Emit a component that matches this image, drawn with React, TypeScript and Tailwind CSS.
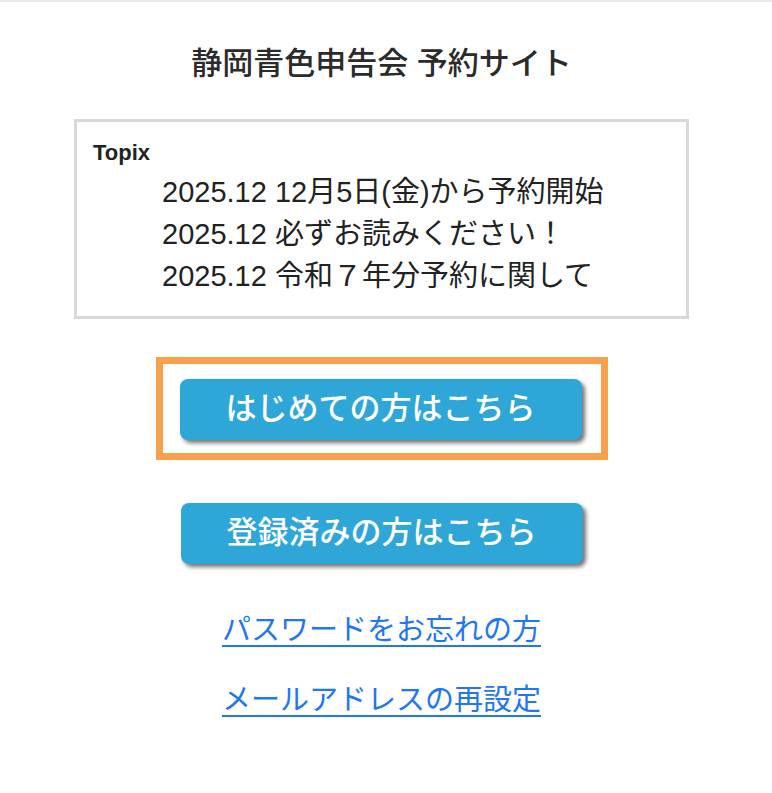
import React from "react";

const jp = { fontFamily: '"Liberation Sans", "Noto Sans CJK JP", sans-serif' };

export default function App() {
  return (
    <div className="min-h-[793px] w-[772px] bg-white border-t-2 border-[#e8e8e8]" style={jp}>
      <div className="w-[763px] flex flex-col items-center">
        <h1 className="mt-[42px] text-[31px] leading-[40px] text-[#2b2b2b] font-medium">静岡青色申告会 予約サイト</h1>
        <div className="mt-[35px] w-[615px] h-[200px] border-[3px] border-[#d9d9d9] pt-[19px] pl-[16px]">
          <div className="text-[22px] leading-[24px] font-bold text-[#222]">Topix</div>
          <div className="mt-[6px] pl-[69px] text-[29px] leading-[42px] text-[#222]">
            <div>2025.12 12月5日(金)から予約開始</div>
            <div>2025.12 必ずお読みください！</div>
            <div>2025.12 令和７年分予約に関して</div>
          </div>
        </div>
        <div className="mt-[38px] border-[7px] border-[#f9a04b] pt-[15px] pb-[13px] pl-[17px] pr-[19px]">
          <button className="w-[402px] h-[61px] rounded-[8px] bg-[#2ea7d8] text-white text-[31px] font-medium shadow-[3px_3px_4px_rgba(0,0,0,0.55)] flex items-center justify-center">
            はじめての方はこちら
          </button>
        </div>
        <button className="mt-[43px] w-[402px] h-[61px] rounded-[8px] bg-[#2ea7d8] text-white text-[31px] font-medium shadow-[3px_3px_4px_rgba(0,0,0,0.55)] flex items-center justify-center">
          登録済みの方はこちら
        </button>
        <a href="#" className="mt-[46px] text-[29px] leading-[40px] text-[#2176f3] underline decoration-2 underline-offset-[5px]">パスワードをお忘れの方</a>
        <a href="#" className="mt-[30px] text-[29px] leading-[40px] text-[#2176f3] underline decoration-2 underline-offset-[5px]">メールアドレスの再設定</a>
      </div>
    </div>
  );
}
